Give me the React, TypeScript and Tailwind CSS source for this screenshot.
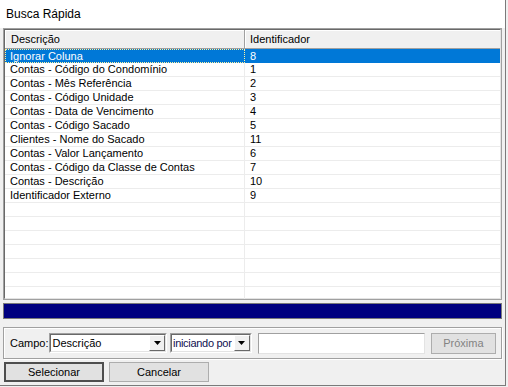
import React from "react";

const rows = [
  { desc: "Ignorar Coluna", id: "8" },
  { desc: "Contas - Código do Condomínio", id: "1" },
  { desc: "Contas - Mês Referência", id: "2" },
  { desc: "Contas - Código Unidade", id: "3" },
  { desc: "Contas - Data de Vencimento", id: "4" },
  { desc: "Contas - Código Sacado", id: "5" },
  { desc: "Clientes - Nome do Sacado", id: "11" },
  { desc: "Contas - Valor Lançamento", id: "6" },
  { desc: "Contas - Código da Classe de Contas", id: "7" },
  { desc: "Contas - Descrição", id: "10" },
  { desc: "Identificador Externo", id: "9" },
  { desc: "", id: "" },
  { desc: "", id: "" },
  { desc: "", id: "" },
  { desc: "", id: "" },
  { desc: "", id: "" },
  { desc: "", id: "" },
  { desc: "", id: "" },
];

const DropButton = () => (
  <div className="w-[16px] h-[16px] bg-[#f0f0f0] border border-t-white border-l-white border-b-[#696969] border-r-[#696969] flex items-center justify-center shrink-0">
    <svg width="7" height="4" viewBox="0 0 7 4">
      <path d="M0 0 H7 L3.5 4 Z" fill="#000" />
    </svg>
  </div>
);

const App = () => {
  return (
    <div
      className="w-[508px] h-[387px] bg-[#f0f0f0] text-[11px] text-black overflow-hidden"
      style={{ fontFamily: '"Liberation Sans", Arial, sans-serif' }}
    >
      <div className="w-[506px] h-[386px] border-r border-b border-[#7a7a7a] flex flex-col">
        <div className="h-[28px] bg-white flex items-center pl-[6px] text-[12px] shrink-0">
          Busca Rápida
        </div>

        <div className="flex flex-col px-[3px]">
          {/* grid */}
          <div className="h-[272px] border border-[#a0a0a0] bg-white overflow-hidden">
            <div className="h-full border border-t-[#696969] border-l-[#696969] border-r-[#e3e3e3] border-b-[#e3e3e3] flex flex-col">
              <div className="h-[19px] flex shrink-0 bg-[#f0f0f0]">
                <div className="w-[240px] border-r border-b border-[#a0a0a0] shadow-[inset_1px_1px_0_#fff] pl-[6px] flex items-center">
                  Descrição
                </div>
                <div className="flex-1 border-b border-[#a0a0a0] shadow-[inset_1px_1px_0_#fff] pl-[5px] flex items-center">
                  Identificador
                </div>
              </div>
              {rows.map((r, i) => (
                <div
                  key={i}
                  className={
                    i === 0
                      ? "h-[14px] flex shrink-0 bg-[#0078d7] text-white"
                      : "h-[14px] flex shrink-0 border-b border-[#ececec]"
                  }
                >
                  <div
                    className={
                      i === 0
                        ? "w-[240px] border border-dotted border-[#fff4a0] pl-[4px] flex items-center leading-[13px] whitespace-nowrap"
                        : "w-[240px] border-r border-[#ececec] pl-[5px] flex items-center leading-[13px] whitespace-nowrap"
                    }
                  >
                    {r.desc}
                  </div>
                  <div className="flex-1 pl-[5px] flex items-center leading-[13px]">
                    {r.id}
                  </div>
                </div>
              ))}
            </div>
          </div>

          {/* progress bar */}
          <div className="mt-[3px] h-[16px] border border-[#7a7a7a] bg-[#000080]" />

          {/* search box */}
          <div className="mt-[8px] h-[32px] border border-[#a0a0a0] shadow-[inset_1px_1px_0_#fff,1px_1px_0_#fff] flex items-center pl-[6px] pr-[5px]">
            <span className="w-[39px]">Campo:</span>
            <div className="w-[120px] h-[20px] bg-white border border-t-[#a0a0a0] border-l-[#a0a0a0] border-r-white border-b-white flex items-center">
              <div className="flex-1 h-full border border-t-[#696969] border-l-[#696969] border-r-[#e3e3e3] border-b-[#e3e3e3] flex items-center justify-between pl-[2px]">
                <span className="whitespace-nowrap">Descrição</span>
                <DropButton />
              </div>
            </div>
            <div className="ml-[3px] w-[83px] h-[20px] bg-white border border-t-[#a0a0a0] border-l-[#a0a0a0] border-r-white border-b-white flex items-center">
              <div className="flex-1 h-full border border-t-[#696969] border-l-[#696969] border-r-[#e3e3e3] border-b-[#e3e3e3] flex items-center justify-between pl-[1px] overflow-hidden">
                <span className="text-[#101050] whitespace-nowrap overflow-hidden tracking-[-0.3px]">iniciando por</span>
                <DropButton />
              </div>
            </div>
            <div className="ml-[6px] w-[169px] h-[21px] bg-white border border-t-[#a0a0a0] border-l-[#a0a0a0] border-r-[#e3e3e3] border-b-[#e3e3e3]" />
            <button className="ml-[6px] w-[66px] h-[21px] bg-[#e1e1e1] border border-[#adadad] text-[#838383]">
              Próxima
            </button>
          </div>

          {/* buttons */}
          <div className="mt-[3px] flex gap-[5px] pl-[1px]">
            <button className="w-[100px] h-[20px] bg-[#e1e1e1] border-2 border-[#4e4e4e]">
              Selecionar
            </button>
            <button className="w-[100px] h-[20px] bg-[#e1e1e1] border border-[#adadad]">
              Cancelar
            </button>
          </div>
        </div>
      </div>
    </div>
  );
};

export default App;
